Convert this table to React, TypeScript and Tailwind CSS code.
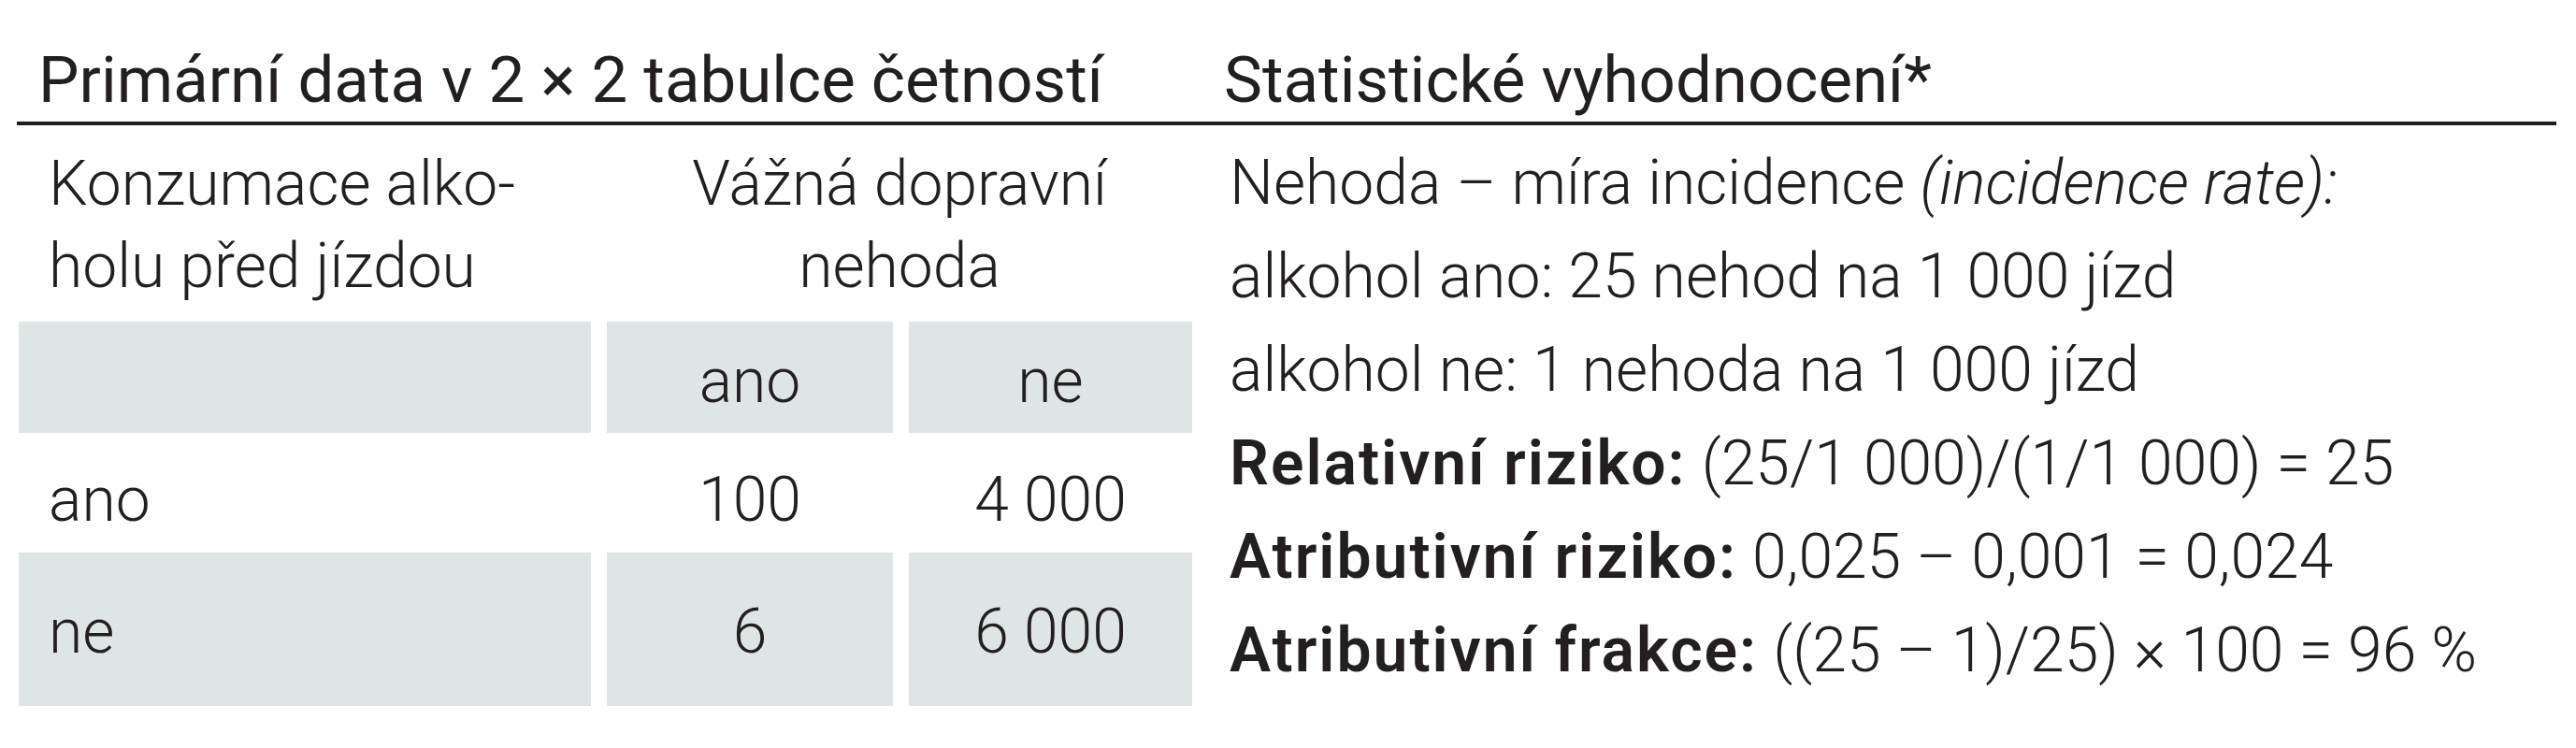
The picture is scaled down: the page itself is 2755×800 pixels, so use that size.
import React from 'react';

const cell = 'flex items-end justify-center';
const bold = 'font-semibold tracking-[0.03em]';

export default function App() {
  return (
    <div className="w-[2755px] h-[800px] bg-white pl-[18px] text-[#231f20] font-['Roboto',sans-serif] text-[66px]">
      <div className="w-[2716px]">
        {/* header */}
        <div className="flex h-[134px] items-end border-b-4 border-[#1e1e1e] pb-[4px] text-[69px] leading-[80px]">
          <div className="w-[1291px] pl-[23px] font-normal">Primární data v 2 × 2 tabulce četností</div>
          <div className="font-normal">Statistické vyhodnocení*</div>
        </div>

        <div className="flex">
          {/* 2x2 table */}
          <div className="ml-[2px] grid w-[1255px] grid-cols-[612px_306px_303px] gap-x-[17px] font-light leading-[1.17]">
            <div className="h-[210px] pl-[32px] pt-[19px] leading-[88px]">
              Konzumace alko-
              <br />
              holu před jízdou
            </div>
            <div className="col-span-2 h-[210px] pt-[19px] text-center leading-[88px]">
              Vážná dopravní
              <br />
              nehoda
            </div>

            <div className="h-[119px] bg-[#dfe5e5]" />
            <div className={`${cell} h-[119px] bg-[#dfe5e5] pb-[17px]`}>ano</div>
            <div className={`${cell} h-[119px] bg-[#dfe5e5] pb-[17px]`}>ne</div>

            <div className="flex h-[128px] items-end pb-[18px] pl-[32px]">ano</div>
            <div className={`${cell} h-[128px] pb-[18px]`}>100</div>
            <div className={`${cell} h-[128px] pb-[18px]`}>4 000</div>

            <div className="flex h-[164px] items-end bg-[#dfe5e5] pb-[41px] pl-[32px]">ne</div>
            <div className={`${cell} h-[164px] bg-[#dfe5e5] pb-[41px]`}>6</div>
            <div className={`${cell} h-[164px] bg-[#dfe5e5] pb-[41px]`}>6 000</div>
          </div>

          {/* statistics */}
          <div className="ml-[40px] pt-[12px] font-light leading-[100px]">
            <div>
              Nehoda – míra incidence <span className="italic">(incidence rate):</span>
            </div>
            <div>alkohol ano: 25 nehod na 1 000 jízd</div>
            <div>alkohol ne: 1 nehoda na 1 000 jízd</div>
            <div>
              <span className={bold}>Relativní riziko:</span> (25/1 000)/(1/1 000) = 25
            </div>
            <div>
              <span className={bold}>Atributivní riziko:</span> 0,025 – 0,001 = 0,024
            </div>
            <div>
              <span className={bold}>Atributivní frakce:</span> ((25 – 1)/25) × 100 = 96 %
            </div>
          </div>
        </div>
      </div>
    </div>
  );
}
